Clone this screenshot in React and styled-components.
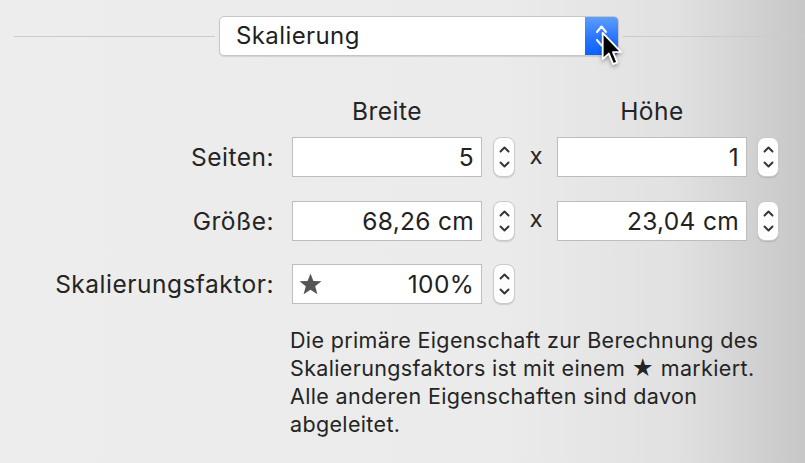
import React from "react";
import styled, { createGlobalStyle } from "styled-components";

const Global = createGlobalStyle`
  html, body { margin: 0; padding: 0; }
  body {
    font-family: "Inter", "Liberation Sans", sans-serif;
    color: #242424;
  }
`;

const Page = styled.div`
  position: relative;
  width: 805px;
  height: 463px;
  box-sizing: border-box;
  padding-top: 16px;
  overflow: hidden;
  background: linear-gradient(90deg, #ededed 0%, #ebebeb 62%, #e1e1e1 84%, #c7c7c7 100%);
`;

const TopBar = styled.div`
  display: flex;
  align-items: center;
  gap: 4px;
  padding-left: 14px;
`;

const Rule = styled.div`
  height: 1px;
  background: #cbcbcb;
  flex: ${(p) => (p.$grow ? 1 : "none")};
  width: ${(p) => (p.$grow ? "auto" : "201px")};
`;

const Popup = styled.div`
  position: relative;
  display: flex;
  width: 400px;
  height: 40px;
  box-sizing: border-box;
  border: 1px solid #c6c6c6;
  border-radius: 5px;
  background: #fff;
  box-shadow: 0 1px 1px rgba(0, 0, 0, 0.12);
  overflow: hidden;
`;

const PopupLabel = styled.div`
  flex: 1;
  padding-left: 16px;
  font-size: 24px;
  letter-spacing: 0.4px;
  line-height: 38px;
  color: #1f1f1f;
`;

const PopupArrows = styled.div`
  width: 33px;
  display: flex;
  align-items: center;
  justify-content: center;
  background: linear-gradient(180deg, #5d9efb 0%, #2a76fd 55%, #0962fe 100%);
`;

const Cursor = styled.svg`
  position: absolute;
  left: 601px;
  top: 31px;
  filter: drop-shadow(0 2px 2px rgba(0, 0, 0, 0.35));
`;

const Heads = styled.div`
  display: grid;
  grid-template-columns: 292px 190px 33px 42px 190px 32px;
  margin-top: 41px;
  margin-bottom: 12px;
`;

const Head = styled.div`
  grid-column: ${(p) => p.$col};
  text-align: center;
  font-size: 24.5px;
  letter-spacing: 0.5px;
  line-height: 28px;
  color: #242424;
`;

const Form = styled.div`
  display: grid;
  grid-template-columns: 292px 190px 33px 42px 190px 32px;
  grid-auto-rows: 40px;
  row-gap: 23.5px;
  align-items: center;
`;

const Label = styled.div`
  grid-column: 1;
  text-align: right;
  padding-right: 18px;
  font-size: 24.5px;
  letter-spacing: 0.5px;
  color: #242424;
`;

const Field = styled.div`
  height: 40px;
  box-sizing: border-box;
  display: flex;
  align-items: center;
  justify-content: space-between;
  padding: 0 7px 0 5px;
  background: #fff;
  border: 1px solid #bdbdbd;
  font-size: 24.5px;
  letter-spacing: 0.3px;
  color: #222;
`;

const Value = styled.span`
  margin-left: auto;
`;

const StepperBox = styled.div`
  margin-left: ${(p) => p.$offset}px;
  width: 22px;
  height: 40px;
  box-sizing: border-box;
  border: 1px solid #cacaca;
  border-radius: 8px;
  background: #fdfdfd;
  box-shadow: 0 1px 1px rgba(0, 0, 0, 0.13);
  display: flex;
  flex-direction: column;
  align-items: center;
  justify-content: center;
  gap: 8px;
`;

const Times = styled.div`
  text-align: center;
  font-size: 24px;
  color: #262626;
  padding-bottom: 4px;
`;

const Note = styled.p`
  margin: 22px 0 0 290px;
  font-size: 21.5px;
  letter-spacing: 0.35px;
  line-height: 28px;
  color: #242424;
`;

const Chevron = ({ down, color = "#333", w = 11, h = 7 }) => (
  <svg width={w} height={h} viewBox="0 0 11 7">
    <polyline
      points={down ? "1.5,1.5 5.5,5.5 9.5,1.5" : "1.5,5.5 5.5,1.5 9.5,5.5"}
      fill="none"
      stroke={color}
      strokeWidth="1.9"
      strokeLinecap="round"
      strokeLinejoin="round"
    />
  </svg>
);

const Stepper = ({ offset = 11 }) => (
  <StepperBox $offset={offset}>
    <Chevron />
    <Chevron down />
  </StepperBox>
);

const Star = () => (
  <svg width="25" height="22" viewBox="0 0 24 22">
    <polygon
      points="12,0.5 14.9,7.9 23,8.3 16.7,13.3 18.9,21.3 12,16.8 5.1,21.3 7.3,13.3 1,8.3 9.1,7.9"
      fill="#555"
    />
  </svg>
);

export default function App() {
  return (
    <>
      <Global />
      <Page>
        <TopBar>
          <Rule />
          <Popup>
            <PopupLabel>Skalierung</PopupLabel>
            <PopupArrows>
              <svg width="13" height="26" viewBox="0 0 13 26">
                <polyline points="2,9 6.5,3.5 11,9" fill="none" stroke="#fff" strokeWidth="2" strokeLinecap="round" strokeLinejoin="round" />
                <polyline points="2,17 6.5,22.5 11,17" fill="none" stroke="#fff" strokeWidth="2" strokeLinecap="round" strokeLinejoin="round" />
              </svg>
            </PopupArrows>
          </Popup>
          <Rule $grow />
        </TopBar>

        <Cursor width="22" height="36" viewBox="0 0 13 21">
          <path
            d="M1,1 L1,16.5 L4.6,13.2 L7.2,19.4 L9.6,18.4 L7.1,12.4 L11.8,12.2 Z"
            fill="#000"
            stroke="#fff"
            strokeWidth="1.1"
            strokeLinejoin="round"
          />
        </Cursor>

        <Heads>
          <Head $col={2}>Breite</Head>
          <Head $col={5}>Höhe</Head>
        </Heads>

        <Form>
          <Label>Seiten:</Label>
          <Field><Value>5</Value></Field>
          <Stepper />
          <Times>x</Times>
          <Field><Value>1</Value></Field>
          <Stepper offset={10} />

          <Label>Größe:</Label>
          <Field><Value>68,26 cm</Value></Field>
          <Stepper />
          <Times>x</Times>
          <Field><Value>23,04 cm</Value></Field>
          <Stepper offset={10} />

          <Label>Skalierungsfaktor:</Label>
          <Field><Star /><Value>100%</Value></Field>
          <Stepper />
        </Form>

        <Note>
          Die primäre Eigenschaft zur Berechnung des
          <br />
          Skalierungsfaktors ist mit einem ★ markiert.
          <br />
          Alle anderen Eigenschaften sind davon
          <br />
          abgeleitet.
        </Note>
      </Page>
    </>
  );
}
